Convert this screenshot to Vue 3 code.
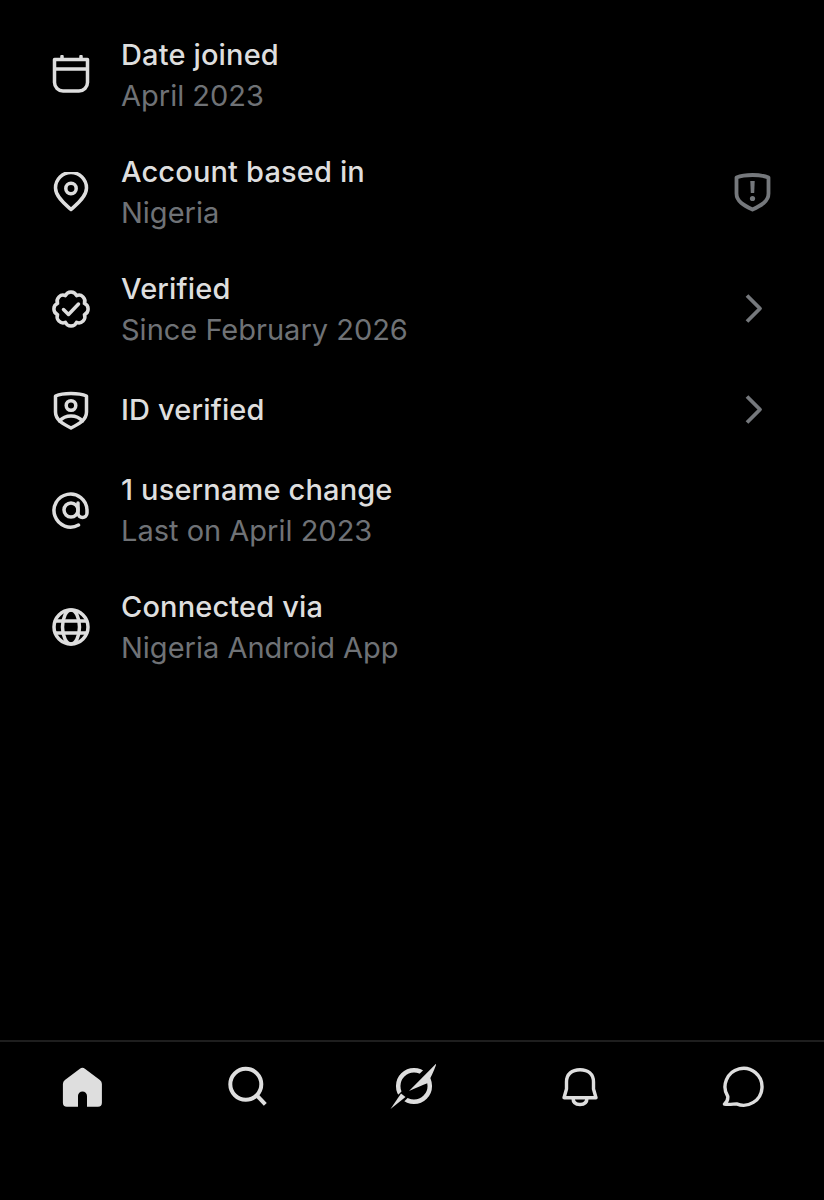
<script setup>
const rows = [
  { key: 'cal', title: 'Date joined', sub: 'April 2023' },
  { key: 'pin', title: 'Account based in', sub: 'Nigeria', right: 'shield' },
  { key: 'check', title: 'Verified', sub: 'Since February 2026', right: 'chev' },
  { key: 'id', title: 'ID verified', right: 'chev' },
  { key: 'at', title: '1 username change', sub: 'Last on April 2023' },
  { key: 'globe', title: 'Connected via', sub: 'Nigeria Android App' },
]
</script>

<template>
  <div class="page">
    <main class="list">
      <div v-for="r in rows" :key="r.key" class="row">
        <svg class="icon" viewBox="0 0 40 40" width="40" height="40">
          <g v-if="r.key === 'cal'">
            <path d="M3.500 4.500h33v23a8.500 8.500 0 0 1-8.500 8.500H12a8.500 8.500 0 0 1-8.500-8.500zM3.500 14h33M11 1.500v3M30 1.500v3" />
          </g>
          <g v-else-if="r.key === 'pin'">
            <path d="M20 37.500C15 33 4.500 25 4.500 16a15.500 15.500 0 0 1 31 0c0 9-10.500 17-15.500 21.500z" />
            <circle cx="20" cy="16.500" r="5.200" />
          </g>
          <g v-else-if="r.key === 'check'">
            <path d="M33.400 14.450A6 6 0 0 1 33.400 25.550A6 6 0 0 1 25.550 33.400A6 6 0 0 1 14.450 33.400A6 6 0 0 1 6.600 25.550A6 6 0 0 1 6.600 14.450A6 6 0 0 1 14.450 6.600A6 6 0 0 1 25.550 6.600A6 6 0 0 1 33.400 14.450z" />
            <path d="M12.500 20.500l5 5 10-10.500" />
          </g>
          <g v-else-if="r.key === 'id'">
            <path d="M4.500 6C9 4 14 3.500 20 3.500S31 4 35.500 6v16c0 8-7.500 12-15.500 16C12 34 4.500 30 4.500 22z" />
            <circle cx="20" cy="15.500" r="4.800" />
            <path d="M8.500 31C12 27 16 26 20 26s8 1 11.500 5" />
          </g>
          <g v-else-if="r.key === 'at'">
            <circle cx="20" cy="20" r="7" />
            <path d="M27 13v10a4.500 4.500 0 0 0 9 0v-3A16.500 16.500 0 1 0 27.500 35" />
          </g>
          <g v-else>
            <circle cx="20" cy="20" r="17" />
            <ellipse cx="20" cy="20" rx="8.500" ry="17" />
            <path d="M4.500 14h31M4.500 26h31" />
          </g>
        </svg>
        <div class="text">
          <div class="title">{{ r.title }}</div>
          <div v-if="r.sub" class="sub">{{ r.sub }}</div>
        </div>
        <svg v-if="r.right === 'shield'" class="side" viewBox="0 0 40 40" width="40" height="40">
          <path class="thick" d="M4.500 5.500C9.500 3.500 14.500 3 20.500 3s11 .5 16 2.500v16c0 8-7.500 12-16 16-8.500-4-16-8-16-16z" />
          <path class="bar" d="M18.300 9h4.400l-.5 12h-3.400z" />
          <circle class="dot" cx="20.500" cy="26.500" r="2.600" />
        </svg>
        <svg v-else-if="r.right === 'chev'" class="side" viewBox="0 0 40 40" width="40" height="40">
          <path class="thick" d="M15 6.500l13 13-13 13" />
        </svg>
      </div>
    </main>

    <nav class="nav">
      <div class="cell">
        <svg viewBox="0 0 48 48" width="48" height="48">
          <path class="fill" fill-rule="evenodd" d="M21.900 5.800a4 4 0 0 1 5 0L41.900 17a5 5 0 0 1 2 4v18.700a4 4 0 0 1-4 4H29V33a4.500 4.500 0 0 0-9 0v10.700H8.900a4 4 0 0 1-4-4V21a5 5 0 0 1 2-4z" />
        </svg>
      </div>
      <div class="cell">
        <svg viewBox="0 0 48 48" width="48" height="48">
          <circle class="line" cx="22.800" cy="21.300" r="15.500" />
          <path class="line" d="M33.800 32.300l8.500 9" />
        </svg>
      </div>
      <div class="cell">
        <svg viewBox="0 0 48 48" width="48" height="48">
          <circle class="line wide" cx="26" cy="23" r="15.800" />
          <path class="gap" d="M48.500 .500L2 46" />
          <path class="fill" d="M48.700 0L21 28C28 25 34 22 40 20 43 14 46 8 48.700 0z" />
          <path class="fill" d="M2.500 46L13 30.500 17.500 34z" />
        </svg>
      </div>
      <div class="cell">
        <svg viewBox="0 0 48 48" width="48" height="48">
          <path class="line thin" d="M11 34.700h32L40.500 26v-7C40.500 11 35 6.700 27 6.700S13.500 11 13.500 19v7zM20 35c0 4.500 3 6.500 7 6.500s7-2 7-6.500" />
        </svg>
      </div>
      <div class="cell">
        <svg viewBox="0 0 48 48" width="48" height="48">
          <path class="line thin" d="M6.500 41C9 39 10 36.500 9.800 33.500A18.500 18.500 0 1 1 18.600 40.900C15 41 10 42 6.500 41z" />
        </svg>
      </div>
    </nav>
  </div>
</template>

<style>
html, body { margin: 0; background: #000; }
</style>

<style scoped>
.page {
  width: 824px;
  height: 1200px;
  background: #000;
  display: flex;
  flex-direction: column;
  font-family: Inter, "Liberation Sans", sans-serif;
  overflow: hidden;
}
.list {
  flex: 1;
  padding: 34px 0 0 51px;
  display: flex;
  flex-direction: column;
  gap: 35px;
}
.row {
  display: flex;
  align-items: center;
  min-height: 49px;
  padding-right: 52px;
}
.icon { flex: none; }
.icon path, .icon circle, .icon ellipse {
  fill: none;
  stroke: #dedede;
  stroke-width: 3.500;
  stroke-linejoin: round;
  stroke-linecap: round;
}
.text { flex: 1; margin-left: 30px; }
.title {
  font-size: 29px;
  line-height: 41px;
  font-weight: 500;
  color: #dedede;
  letter-spacing: 0.15px;
}
.sub {
  font-size: 29px;
  line-height: 41px;
  font-weight: 400;
  color: #6f7276;
  letter-spacing: 0;
}
.side { flex: none; }
.thick {
  fill: none;
  stroke: #75787c;
  stroke-width: 3.800;
  stroke-linejoin: round;
}
.bar, .dot { fill: #75787c; }
.nav {
  flex: none;
  height: 160px;
  box-sizing: border-box;
  border-top: 2px solid #1e1e1e;
  display: grid;
  grid-template-columns: repeat(5, 1fr);
  align-items: start;
  padding-top: 21px;
}
.cell { display: flex; justify-content: center; }
.fill { fill: #dedede; }
.line {
  fill: none;
  stroke: #dedede;
  stroke-width: 4;
  stroke-linejoin: round;
}
.line.thin { stroke-width: 3.400; }
.line.wide { stroke-width: 4.500; }
.gap { stroke: #000; stroke-width: 9; fill: none; }
</style>
